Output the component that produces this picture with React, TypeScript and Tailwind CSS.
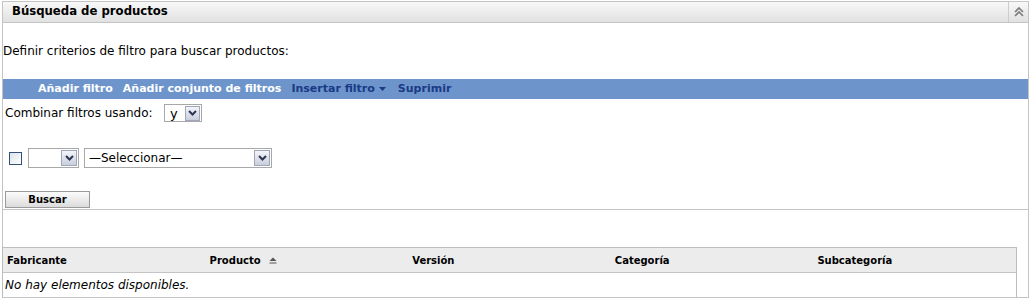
import React from 'react';

const DropButton = ({ size = 15 }: { size?: number }) => (
  <span
    className="flex items-center justify-center border border-[#9ea6b8] bg-gradient-to-b from-[#f4f5fa] to-[#c9cedd]"
    style={{ width: size, height: size }}
  >
    <svg width="9" height="6" viewBox="0 0 9 6">
      <path d="M1 1 L4.5 4.5 L8 1" fill="none" stroke="#2b3550" strokeWidth="2" />
    </svg>
  </span>
);

const SortIcon = () => (
  <svg width="8" height="7" viewBox="0 0 8 7" className="ml-[8px]">
    <path d="M0.5 4 L4 0.5 L7.5 4 Z" fill="#555" />
    <rect x="0.5" y="5.5" width="7" height="1" fill="#555" />
  </svg>
);

const columns = ['Fabricante', 'Producto', 'Versión', 'Categoría', 'Subcategoría'];

export default function App() {
  return (
    <div className="w-[1030px] h-[299px] bg-white pt-px pl-[2px] pr-px font-['DejaVu_Sans',sans-serif] text-[12px] text-black">
      <div className="border border-[#c4c4c4] h-[297px] flex flex-col">
        {/* Header */}
        <div className="h-[21px] flex items-stretch border-b border-[#c4c4c4] bg-gradient-to-b from-[#f8f8f8] to-[#e1e1e1]">
          <div className="flex-1 flex items-center pl-[9px] text-[11.7px] font-bold">Búsqueda de productos</div>
          <div className="w-[20px] border-l border-[#cdcdcd] flex items-center justify-center">
            <svg width="10" height="10" viewBox="0 0 10 10">
              <path d="M1 5 L5 1 L9 5" fill="none" stroke="#7a7a7a" strokeWidth="1.6" />
              <path d="M1 9 L5 5 L9 9" fill="none" stroke="#7a7a7a" strokeWidth="1.6" />
            </svg>
          </div>
        </div>

        {/* Filter form */}
        <div className="border-b border-[#c4c4c4] h-[187px]">
          <p className="mt-[21px] leading-[14px]">Definir criterios de filtro para buscar productos:</p>

          <div className="mt-[21px] h-[20px] bg-[#6d95cc] flex items-center pl-[35px] gap-[10px] text-[11px] font-bold">
            <span className="text-white">Añadir filtro</span>
            <span className="text-white">Añadir conjunto de filtros</span>
            <span className="text-[#1b3a85] flex items-center gap-[4px]">
              Insertar filtro
              <svg width="7" height="4" viewBox="0 0 7 4"><path d="M0 0 L7 0 L3.5 4 Z" fill="#1b3a85" /></svg>
            </span>
            <span className="text-[#1b3a85] ml-[2px]">Suprimir</span>
          </div>

          <div className="mt-[5px] flex items-center pl-[2px]">
            <span className="w-[159px]">Combinar filtros usando:</span>
            <div className="w-[38px] h-[18px] border border-[#a8a8a8] flex items-center justify-between pl-[5px] pr-px">
              <span className="text-[13px] leading-none">y</span>
              <DropButton size={15} />
            </div>
          </div>

          <div className="mt-[26px] flex items-center pl-[6px]">
            <span className="w-[13px] h-[13px] border border-[#31507a] bg-gradient-to-br from-[#dde3ea] to-[#ffffff]" />
            <div className="ml-[6px] w-[51px] h-[20px] border border-[#a8a8a8] flex items-center justify-end pr-px">
              <DropButton size={16} />
            </div>
            <div className="ml-[5px] w-[188px] h-[20px] border border-[#a8a8a8] flex items-center justify-between pl-[4px] pr-px">
              <span className="text-[12px]">—Seleccionar—</span>
              <DropButton size={16} />
            </div>
          </div>

          <button className="mt-[23px] ml-[2px] w-[85px] h-[17px] border border-[#9a9a9a] bg-gradient-to-b from-[#fbfbfb] to-[#dcdcdc] text-[10px] font-bold leading-none flex items-center justify-center">
            Buscar
          </button>
        </div>

        {/* Results table */}
        <div className="mt-[37px] w-[1015px] border-t border-x border-[#bdbdbd] -ml-px">
          <div className="h-[25px] bg-[#ececec] border-b border-[#c4c4c4] grid grid-cols-5 items-center text-[10px] font-bold">
            {columns.map((c) => (
              <div key={c} className="pl-[4px] pt-px flex items-center">
                {c}
                {c === 'Producto' && <SortIcon />}
              </div>
            ))}
          </div>
          <div className="h-[24px] flex items-center pl-[2px] italic">No hay elementos disponibles.</div>
        </div>
      </div>
    </div>
  );
}
